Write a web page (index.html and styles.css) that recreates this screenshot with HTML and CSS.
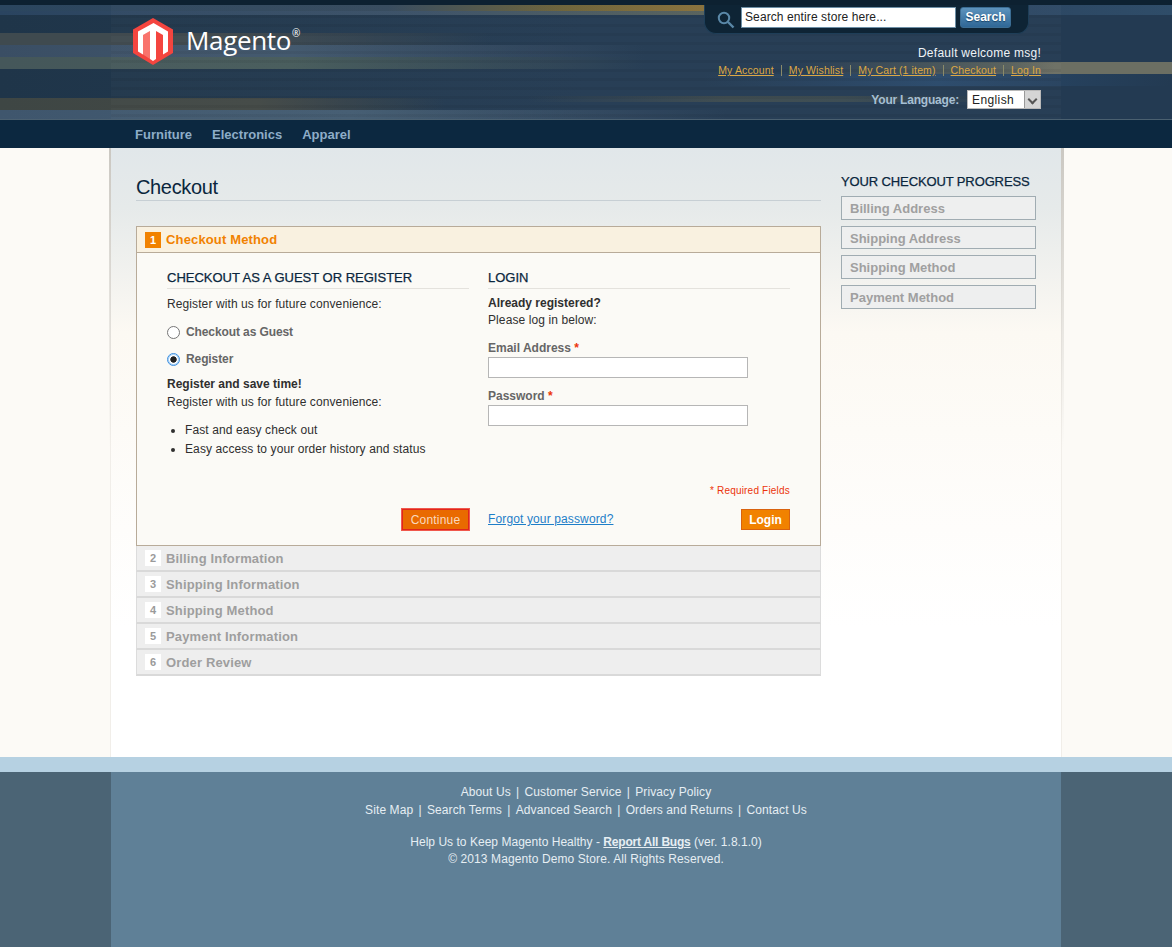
FILE: index.html
```html
<!DOCTYPE html>
<html lang="en">
<head>
  <meta charset="UTF-8" />
  <title>Checkout</title>
  <link rel="stylesheet" href="styles.css">
</head>
<body>
  <header class="header">
    <div class="shell top">
      <a class="logo" href="#">
        <svg width="40" height="47" viewBox="0 0 40 47">
          <polygon points="20,0 40,11.5 40,35 20,47 0,35 0,11.5" fill="#f4453f"/>
          <polygon points="10,17 17,13 17,41 10,36.5" fill="#f9736c"/>
          <polygon points="20.5,5 35,13.5 35,33.5 30,36.5 30,17 23,13 23,41 20,43 17,41 17,13 10,17 10,36.5 5,33.5 5,13.5" fill="#fff"/>
        </svg>
        <span class="logo-text">Magento<sup>®</sup></span>
      </a>
      <div class="top-right">
        <form class="search">
          <svg class="search-icon" width="18" height="18" viewBox="0 0 18 18">
            <circle cx="7" cy="7" r="5.2" fill="none" stroke="#5a88a8" stroke-width="2"/>
            <line x1="11" y1="11" x2="16.5" y2="16.5" stroke="#5a88a8" stroke-width="2.4"/>
          </svg>
          <input class="search-input" value="Search entire store here...">
          <button class="search-btn" type="button">Search</button>
        </form>
        <p class="welcome">Default welcome msg!</p>
        <ul class="links">
          <li><a href="#">My Account</a></li>
          <li><a href="#">My Wishlist</a></li>
          <li><a href="#">My Cart (1 item)</a></li>
          <li><a href="#">Checkout</a></li>
          <li><a href="#">Log In</a></li>
        </ul>
        <div class="language">
          <label>Your Language:</label>
          <div class="fake-select"><span>English</span><i class="arrow"></i></div>
        </div>
      </div>
    </div>
    <nav class="nav">
      <div class="shell nav-inner">
        <a href="#">Furniture</a>
        <a href="#">Electronics</a>
        <a href="#">Apparel</a>
      </div>
    </nav>
  </header>

  <div class="page">
    <main class="shell main">
      <section class="content">
        <h1 class="page-title">Checkout</h1>

        <div class="step active">
          <div class="step-head"><span class="num">1</span><h2>Checkout Method</h2></div>
          <div class="step-body">
            <div class="col">
              <h3>Checkout as a Guest or Register</h3>
              <p>Register with us for future convenience:</p>
              <label class="radio first"><input type="radio" name="method"><span>Checkout as Guest</span></label>
              <label class="radio"><input type="radio" name="method" checked><span>Register</span></label>
              <p class="save"><strong>Register and save time!</strong><br>Register with us for future convenience:</p>
              <ul class="perks">
                <li>Fast and easy check out</li>
                <li>Easy access to your order history and status</li>
              </ul>
              <div class="actions right">
                <button class="btn btn-continue" type="button">Continue</button>
              </div>
            </div>
            <div class="col">
              <h3>Login</h3>
              <p class="already"><strong>Already registered?</strong><br>Please log in below:</p>
              <label class="field first">Email Address <em>*</em></label>
              <input class="text" type="text">
              <label class="field">Password <em>*</em></label>
              <input class="text" type="password">
              <p class="required">* Required Fields</p>
              <div class="actions between">
                <a class="forgot" href="#">Forgot your password?</a>
                <button class="btn btn-login" type="button">Login</button>
              </div>
            </div>
          </div>
        </div>

        <div class="step"><div class="step-head"><span class="num">2</span><h2>Billing Information</h2></div></div>
        <div class="step"><div class="step-head"><span class="num">3</span><h2>Shipping Information</h2></div></div>
        <div class="step"><div class="step-head"><span class="num">4</span><h2>Shipping Method</h2></div></div>
        <div class="step"><div class="step-head"><span class="num">5</span><h2>Payment Information</h2></div></div>
        <div class="step"><div class="step-head"><span class="num">6</span><h2>Order Review</h2></div></div>
      </section>

      <aside class="sidebar">
        <h4>Your Checkout Progress</h4>
        <div class="progress">Billing Address</div>
        <div class="progress short">Shipping Address</div>
        <div class="progress">Shipping Method</div>
        <div class="progress">Payment Method</div>
      </aside>
    </main>
  </div>

  <footer class="footer">
    <div class="shell footer-inner">
      <ul class="foot-links">
        <li><a href="#">About Us</a></li>
        <li><a href="#">Customer Service</a></li>
        <li><a href="#">Privacy Policy</a></li>
      </ul>
      <ul class="foot-links">
        <li><a href="#">Site Map</a></li>
        <li><a href="#">Search Terms</a></li>
        <li><a href="#">Advanced Search</a></li>
        <li><a href="#">Orders and Returns</a></li>
        <li><a href="#">Contact Us</a></li>
      </ul>
      <p class="bugs">Help Us to Keep Magento Healthy - <a href="#">Report All Bugs</a> (ver. 1.8.1.0)</p>
      <p class="copy">© 2013 Magento Demo Store. All Rights Reserved.</p>
    </div>
  </footer>
</body>
</html>
```

FILE: styles.css
```css
* {
  box-sizing: border-box;
}

body {
  margin: 0;
  font-family: "Liberation Sans", Arial, sans-serif;
  font-size: 12px;
  letter-spacing: 0.1px;
  color: #2f2f2f;
  background: #fff;
}

h1, h2, h3, h4, p, ul {
  margin: 0;
  padding: 0;
}

ul {
  list-style: none;
}

strong {
  letter-spacing: 0;
}

.shell {
  width: 950px;
  margin: 0 auto;
}

/* header stripes are stacked gradients */
.header {
  background:
    linear-gradient(#0d2131, #0d2131) 0 0 / 100% 5px no-repeat,
    linear-gradient(to right, #2b465f 0, #34495c 55%, #6c6238 80%, #87703a 100%) 0 5px / 705px 6px no-repeat,
    linear-gradient(to right, #2a4460 0, #3a5066 60%, #56605a 100%) 0 11px / 705px 4px no-repeat,
    linear-gradient(to right, #2c4763, #2f4d69) 1029px 5px / 143px 10px no-repeat,
    linear-gradient(to right, #3f4a4f 0, #3f4a4f 20%, transparent 42%) 0 33px / 100% 12px no-repeat,
    linear-gradient(to right, #3a4e64 0, #40566c 25%, transparent 55%) 0 45px / 100% 12px no-repeat,
    linear-gradient(to right, #45575a 0, #465a5a 25%, transparent 55%) 0 57px / 100% 12px no-repeat,
    linear-gradient(to left, #6c6f63 0, #6c6f63 10%, #565f5c 14%, transparent 32%) 0 62px / 100% 12px no-repeat,
    linear-gradient(to right, transparent 60%, #29496a 80%, transparent) 0 74px / 100% 12px no-repeat,
    linear-gradient(to right, transparent 45%, #3c4a4e 62%, #3a4a50 72%, transparent 86%) 0 96px / 100% 6px no-repeat,
    linear-gradient(to right, #3e4644 0, #424845 22%, transparent 38%) 0 98px / 100% 12px no-repeat,
    linear-gradient(to right, #3f566d 0, #435b71 30%, transparent 62%) 0 110px / 100% 9px no-repeat,
    linear-gradient(to right, #1f3549, #233a52 50%, #233a52) 0 0 / 100% 119px no-repeat,
    #0c2840;
}

.top {
  display: flex;
  justify-content: space-between;
  height: 119px;
  background:
    repeating-linear-gradient(to bottom, rgba(0,0,0,0.05) 0 3px, transparent 3px 9px) 0 15px / 100% 104px no-repeat,
    linear-gradient(to bottom, transparent 5px, rgba(255,255,255,0.025) 5px);
}

.logo {
  display: flex;
  align-items: flex-start;
  gap: 13px;
  margin: 18px 0 0 22px;
  color: #fff;
  text-decoration: none;
}

.logo-text {
  font-family: "Open Sans", sans-serif;
  font-size: 26px;
  line-height: 44px;
  letter-spacing: -0.35px;
  color: #fff;
}

.logo-text sup {
  font-size: 10px;
  line-height: 0;
  vertical-align: 13px;
  margin-left: 1px;
}

.top-right {
  display: flex;
  flex-direction: column;
  align-items: flex-end;
  width: 340px;
  padding-right: 20px;
}

.search {
  display: flex;
  align-items: center;
  flex: none;
  width: 325px;
  height: 29px;
  margin: 5px 12px 0 0;
  padding: 0 0 4px 12px;
  background: #0e2435;
  border: 1px solid #1e3e58;
  border-top: 0;
  border-radius: 0 0 12px 12px;
}

.search-icon {
  margin-top: 6px;
}

.search-input {
  width: 215px;
  height: 21px;
  margin-left: 6px;
  padding: 0 3px;
  border: 1px solid #6d8fa6;
  font-family: "Liberation Sans", Arial, sans-serif;
  font-size: 12px;
  letter-spacing: 0.1px;
  color: #222;
  background: #fff;
}

.search-btn {
  width: 51px;
  height: 21px;
  margin-left: 4px;
  padding: 0;
  border: 1px solid #3b6d94;
  border-radius: 3px;
  background: linear-gradient(to bottom, #5d93bd, #2f6796);
  color: #fff;
  font-family: "Liberation Sans", Arial, sans-serif;
  font-size: 12px;
  font-weight: bold;
  text-shadow: 0 1px 1px #1a4468;
}

.welcome {
  margin-top: 12px;
  font-size: 12px;
  line-height: 14px;
  letter-spacing: 0.25px;
  color: #eef3f7;
}

.links {
  display: flex;
  margin-top: 3px;
  font-size: 10.5px;
  line-height: 14px;
  letter-spacing: 0.13px;
  white-space: nowrap;
}

.links li + li {
  margin-left: 7px;
  padding-left: 7px;
  border-left: 1px solid #8a8a6a;
  height: 11px;
  line-height: 11px;
  margin-top: 2px;
}

.links a {
  color: #dca845;
}

.language {
  display: flex;
  align-items: center;
  gap: 8px;
  margin-top: 13px;
}

.language label {
  font-weight: bold;
  letter-spacing: -0.2px;
  color: #a6bfd3;
}

.fake-select {
  display: flex;
  justify-content: space-between;
  align-items: center;
  width: 74px;
  height: 19px;
  padding-left: 4px;
  background: #fff;
  border: 1px solid #b9b9b9;
  font-size: 12px;
  letter-spacing: 0.4px;
  color: #222;
}

.arrow {
  position: relative;
  width: 16px;
  height: 17px;
  background: #d5d5d5;
  border-left: 1px solid #999;
}

.arrow::after {
  content: "";
  position: absolute;
  left: 4px;
  top: 5px;
  width: 5px;
  height: 5px;
  border-right: 2px solid #555;
  border-bottom: 2px solid #555;
  transform: rotate(45deg);
}

.nav {
  height: 29px;
  background: #0c2840;
  border-top: 1px solid #4b6070;
}

.nav-inner {
  display: flex;
  gap: 20px;
  padding-left: 24px;
}

.nav-inner a {
  font-size: 13px;
  font-weight: bold;
  line-height: 29px;
  letter-spacing: 0;
  color: #8eadc8;
  text-decoration: none;
}

/* main */
.page {
  background:
    linear-gradient(to bottom, #cbc8c2, rgba(241,238,233,0)) 109px 0 / 2px 300px no-repeat,
    linear-gradient(to bottom, #cbc8c2, rgba(241,238,233,0)) 1061px 0 / 3px 300px no-repeat,
    linear-gradient(#f1eee9, #f1eee9) 110px 0 / 1px 100% no-repeat,
    linear-gradient(#f1eee9, #f1eee9) 1061px 0 / 1px 100% no-repeat,
    #fcfaf6;
}

.main {
  display: flex;
  height: 609px;
  padding: 0 25px;
  background: linear-gradient(to bottom, #e1e7ea 0, #e6eaea 60px, #fcf9f3 185px, #fff 480px);
}

.content {
  width: 685px;
}

.page-title {
  height: 26px;
  margin-top: 27px;
  margin-bottom: 25px;
  font-size: 20px;
  font-weight: normal;
  line-height: 25px;
  letter-spacing: -0.35px;
  color: #0a263d;
  border-bottom: 1px solid #c7cfd4;
}

.step {
  border: 1px solid #dcdcdc;
  border-top: 0;
  border-bottom: 2px solid #d9d9d9;
  background: #eee;
}

.step .step-head {
  display: flex;
  align-items: center;
  gap: 5px;
  height: 24px;
  padding-left: 8px;
}

.step h2 {
  font-size: 13px;
  font-weight: bold;
  letter-spacing: 0.15px;
  color: #9e9e9e;
}

.num {
  width: 16px;
  height: 16px;
  background: #fff;
  text-align: center;
  font-size: 11px;
  font-weight: bold;
  line-height: 16px;
  color: #9a9a9a;
}

.step.active {
  background: #fbfaf6;
  border: 1px solid #b8ab99;
}

.step.active .step-head {
  height: 26px;
  background: #f9f1e0;
  border-bottom: 1px solid #b8ab99;
}

.step.active h2 {
  color: #f18200;
}

.step.active .num {
  background: #f18200;
  color: #fff;
}

.step-body {
  display: grid;
  grid-template-columns: 302px 302px;
  gap: 19px;
  height: 292px;
  padding: 16px 30px 14px;
}

.col {
  display: flex;
  flex-direction: column;
  min-width: 0;
}

.col h3 {
  height: 20px;
  margin-bottom: 7px;
  font-size: 13px;
  font-weight: normal;
  line-height: 17px;
  letter-spacing: 0;
  color: #0a263d;
  text-transform: uppercase;
  border-bottom: 1px solid #e4e2dd;
  -webkit-text-stroke: 0.25px #0a263d;
}

.col p {
  line-height: 17px;
}

.already {
  margin-top: -1px;
}

.radio {
  display: flex;
  align-items: center;
  gap: 6px;
  height: 16px;
  margin-top: 11px;
  font-weight: bold;
  letter-spacing: -0.1px;
  color: #666;
}

.radio input {
  appearance: none;
  width: 13px;
  height: 13px;
  margin: 0;
  background: #fff;
  border: 1px solid #767676;
  border-radius: 50%;
}

.radio input:checked {
  border: 1px solid #3b8fe0;
  box-shadow: inset 0 0 0 1px #a8d0f5;
  background: radial-gradient(circle, #222 0, #222 2.8px, #fff 3.6px);
}

.col p.save {
  margin-top: 8px;
  line-height: 18px;
}

.perks {
  margin-top: 10px;
  line-height: 19px;
  list-style: disc;
  padding-left: 18px;
}

.field {
  display: block;
  margin-top: 11px;
  line-height: 15px;
  padding-bottom: 1px;
  font-weight: bold;
  letter-spacing: 0;
  color: #666;
}

.field.first {
  margin-top: 12px;
}

.field em {
  font-style: normal;
  color: #eb340a;
}

.text {
  width: 260px;
  height: 21px;
  background: #fff;
  border: 1px solid #b6b6b6;
}

.col p.required {
  margin-top: 56px;
  text-align: right;
  font-size: 10px;
  letter-spacing: 0.2px;
  color: #eb340a;
}

.actions {
  display: flex;
  align-items: center;
  margin-top: auto;
}

.actions.right {
  justify-content: flex-end;
  margin-bottom: 1px;
}

.actions.between {
  justify-content: space-between;
  margin-bottom: 1px;
}

.forgot {
  margin-bottom: 1px;
  letter-spacing: 0.13px;
  color: #1e7ec8;
}

.btn {
  padding: 0;
  font-family: "Liberation Sans", Arial, sans-serif;
  font-size: 12px;
}

.btn-continue {
  width: 67px;
  height: 21px;
  background: #e96a00;
  border: 1px solid #e0261c;
  box-shadow: 0 0 0 1px #f0584c;
  letter-spacing: 0.2px;
  color: #f9d9bf;
}

.btn-login {
  width: 49px;
  height: 21px;
  background: #f18200;
  border: 1px solid #d9630f;
  color: #fff;
  font-weight: bold;
}

/* sidebar */
.sidebar {
  width: 195px;
  margin-left: 20px;
  padding-top: 26px;
}

.sidebar h4 {
  margin-bottom: 6px;
  font-size: 13px;
  font-weight: normal;
  line-height: 16px;
  letter-spacing: -0.12px;
  white-space: nowrap;
  color: #0a263d;
  text-transform: uppercase;
  -webkit-text-stroke: 0.25px #0a263d;
}

.progress {
  height: 24px;
  margin-bottom: 6px;
  padding-left: 8px;
  background: #eeefef;
  border: 1px solid #a0acb2;
  font-size: 13px;
  font-weight: bold;
  line-height: 23px;
  letter-spacing: 0;
  color: #a0a0a0;
}

.progress.short {
  height: 23px;
}

/* footer */
.footer {
  height: 190px;
  background: #4b6475;
  border-top: 15px solid #b6d1e2;
}

.footer-inner {
  height: 175px;
  padding-top: 11px;
  background: #5f8097;
  color: #e6eef3;
  text-align: center;
}

.foot-links {
  display: flex;
  justify-content: center;
  line-height: 18px;
}

.foot-links li + li::before {
  content: "|";
  margin: 0 5.25px;
}

.footer a {
  color: #e6eef3;
  text-decoration: none;
}

.bugs {
  margin-top: 15px;
  line-height: 17px;
  letter-spacing: 0.03px;
}

.bugs a {
  font-weight: bold;
  letter-spacing: -0.2px;
  text-decoration: underline;
}

.copy {
  line-height: 17px;
}
```
